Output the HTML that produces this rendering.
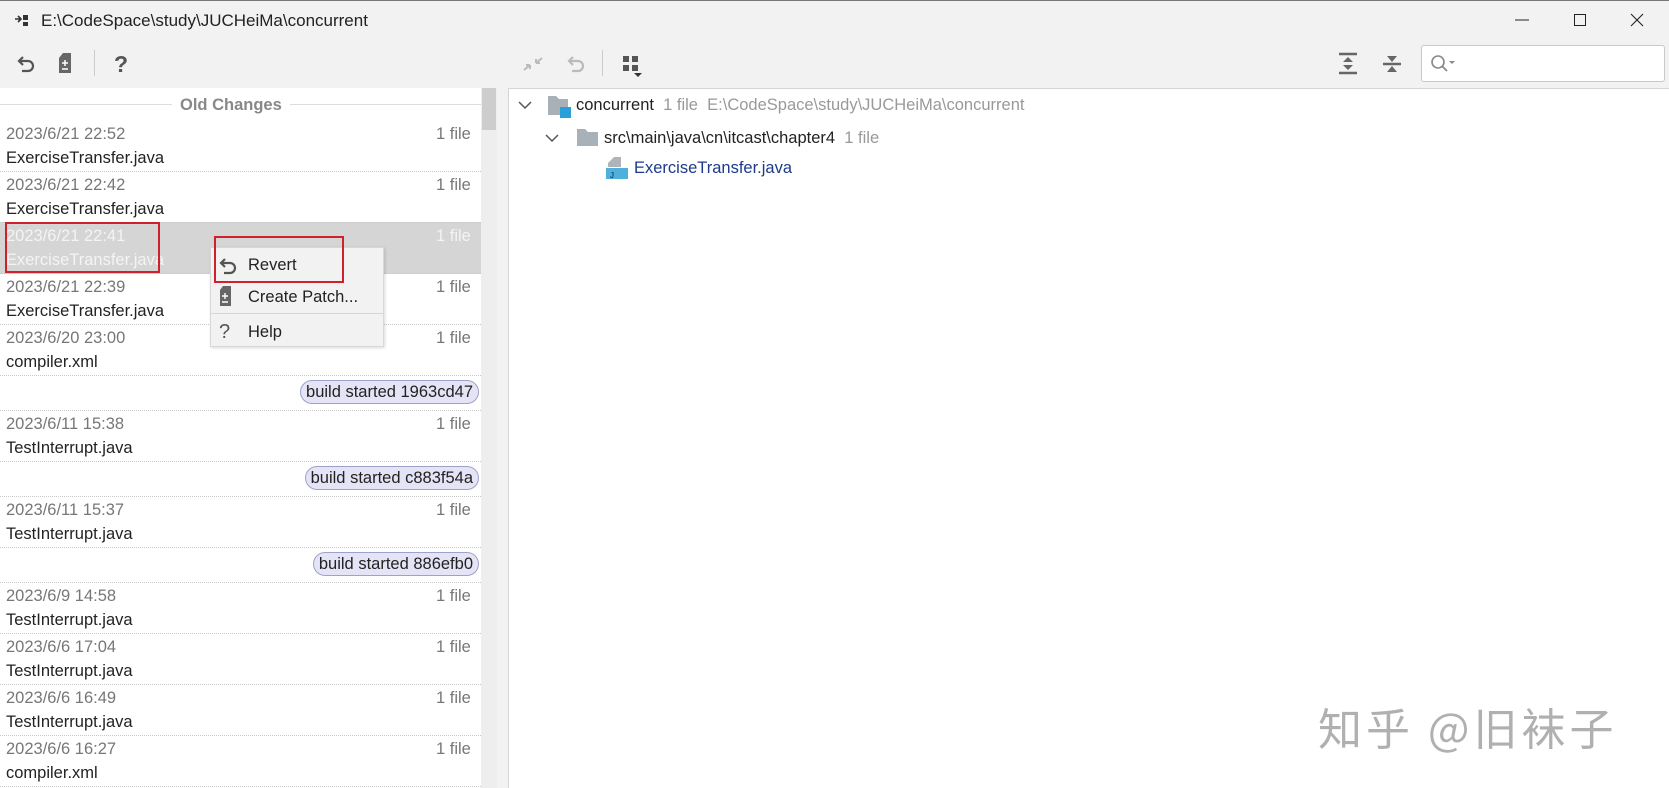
<!DOCTYPE html>
<html><head><meta charset="utf-8"><style>
*{margin:0;padding:0;box-sizing:border-box}
body{width:1669px;height:788px;overflow:hidden;background:#f2f2f2;font-family:"Liberation Sans","Noto Sans CJK SC",sans-serif;font-size:16px;color:#222;position:relative}
.a{position:absolute;white-space:nowrap}
.topline{position:absolute;left:0;top:0;width:1669px;height:1px;background:#777}
.left{position:absolute;left:0;top:88px;width:481px;height:700px;background:#fff}
.sb{position:absolute;left:481px;top:88px;width:16px;height:700px;background:#eee}
.thumb{position:absolute;left:482px;top:88px;width:14px;height:42px;background:#cdcdcd}
.right{position:absolute;left:508px;top:88px;width:1161px;height:700px;background:#fff;border-left:1px solid #d5d5d5;border-top:1px solid #d5d5d5}
.sep{position:absolute;left:0;width:481px;border-top:1px dotted #c8c8c8}
.pill{position:absolute;height:24px;border:1px solid #9ea2c8;background:#e4e4f6;border-radius:12px;padding:0 5px;line-height:22px;color:#222}
.menu{position:absolute;left:210px;top:247px;width:174px;height:100px;background:#f2f2f2;border:1px solid #d8d8d8;box-shadow:1px 1px 3px rgba(0,0,0,.15)}
.red{position:absolute;border:2px solid #d0202a}
</style></head><body>
<div class="topline"></div>
<svg class="a" style="left:14px;top:13px" width="16" height="16"><path d="M1 6h6M4 3l3 3-3 3" stroke="#333" stroke-width="1.6" fill="none"/><rect x="9" y="2" width="5" height="5" fill="#333"/><rect x="9" y="9" width="5" height="4" fill="#333"/></svg>
<div class="a" style="left:41px;top:11px;font-size:17px;color:#222">E:\CodeSpace\study\JUCHeiMa\concurrent</div>
<svg class="a" style="left:1512px;top:12px" width="140" height="16"><path d="M3 8h14" stroke="#222" stroke-width="1"/><rect x="62.5" y="2.5" width="11" height="11" fill="none" stroke="#222"/><path d="M119 2l12 12M131 2l-12 12" stroke="#222" stroke-width="1.1"/></svg>
<svg class="a" style="left:16px;top:54px" width="22" height="20"><path d="M7 3L3 7l4 4M3 7h9a5 5 0 0 1 0 10H6" stroke="#555" stroke-width="2.2" fill="none"/></svg>
<svg class="a" style="left:58px;top:52px" width="18" height="22"><path d="M5 1h8v20H1V6z" fill="#666"/><path d="M4 11h6M7 8v6M4 17h6" stroke="#fff" stroke-width="1.5"/></svg>
<div class="a" style="left:94px;top:50px;width:1px;height:26px;background:#ccc"></div>
<div class="a" style="left:114px;top:51px;font-size:23px;color:#555;font-weight:bold">?</div>
<svg class="a" style="left:522px;top:54px" width="22" height="20"><path d="M2 16l6-5M8 11v4M8 11H4M20 4l-6 5M14 9V5M14 9h4" stroke="#bbb" stroke-width="2" fill="none"/></svg>
<svg class="a" style="left:566px;top:54px" width="22" height="20"><path d="M7 3L3 7l4 4M3 7h9a5 5 0 0 1 0 10H6" stroke="#bbb" stroke-width="2.2" fill="none"/></svg>
<div class="a" style="left:602px;top:50px;width:1px;height:26px;background:#ccc"></div>
<svg class="a" style="left:622px;top:55px" width="22" height="24"><rect x="1" y="1" width="6" height="6" fill="#555"/><rect x="10" y="1" width="6" height="6" fill="#555"/><rect x="1" y="10" width="6" height="6" fill="#555"/><rect x="10" y="10" width="6" height="6" fill="#555"/><path d="M12 18h8l-4 4z" fill="#333"/></svg>
<svg class="a" style="left:1338px;top:52px" width="20" height="24"><path d="M1 2h18M1 21h18" stroke="#666" stroke-width="2.4"/><path d="M10 5l5 5H5zM10 18l5-5H5z" fill="#666"/></svg>
<svg class="a" style="left:1382px;top:52px" width="20" height="24"><path d="M1 12h18" stroke="#666" stroke-width="2.4"/><path d="M10 10l5-6H5zM10 14l5 6H5z" fill="#666"/></svg>
<div class="a" style="left:1421px;top:45px;width:244px;height:37px;background:#fff;border:1px solid #c9c9c9;border-radius:3px"></div>
<svg class="a" style="left:1430px;top:54px" width="28" height="22"><circle cx="8" cy="8" r="6" stroke="#888" stroke-width="1.6" fill="none"/><path d="M12 12l5 5" stroke="#888" stroke-width="1.8"/><path d="M19 7h6l-3 3z" fill="#888"/></svg>
<div class="left">
 <div class="a" style="left:0;top:16px;width:481px;border-top:1px solid #ddd"></div>
 <div class="a" style="left:172px;top:8px;padding:0 8px;background:#fff;color:#888;font-weight:bold;font-size:16.5px">Old Changes</div>
</div>
<div class="a" style="left:0;top:222px;width:481px;height:52px;background:#d5d5d5"></div>
<div id="rows"></div>
<div class="sb"></div><div class="thumb"></div>
<div class="a" style="left:497px;top:88px;width:11px;height:700px;background:#f2f2f2"></div>
<div class="right"></div>
<svg class="a" style="left:518px;top:100px" width="14" height="10"><path d="M1 2l6 6 6-6" stroke="#555" stroke-width="1.5" fill="none"/></svg>
<svg class="a" style="left:547px;top:95px" width="26" height="24"><path d="M1 1h8l3 3h9v16H1z" fill="#a8b0b8"/><rect x="13" y="12" width="11" height="11" fill="#2aa0d8"/></svg>
<div class="a" style="left:576px;top:96px;font-size:16.5px">concurrent <span style="color:#999">&nbsp;1 file&nbsp; E:\CodeSpace\study\JUCHeiMa\concurrent</span></div>
<svg class="a" style="left:545px;top:133px" width="14" height="10"><path d="M1 2l6 6 6-6" stroke="#555" stroke-width="1.5" fill="none"/></svg>
<svg class="a" style="left:576px;top:128px" width="24" height="20"><path d="M1 1h8l3 3h10v14H1z" fill="#a8b0b8"/></svg>
<div class="a" style="left:604px;top:129px;font-size:16.5px">src\main\java\cn\itcast\chapter4 <span style="color:#999">&nbsp;1 file</span></div>
<svg class="a" style="left:605px;top:156px" width="24" height="24"><path d="M9 1h7v10H3V7z" fill="#b0b4b8"/><rect x="1" y="12" width="22" height="11" fill="#4fb0dc"/><text x="5" y="22" font-size="8" fill="#123" font-family="Liberation Sans">J</text></svg>
<div class="a" style="left:634px;top:159px;font-size:16.5px;color:#1c3b8c">ExerciseTransfer.java</div>
<div class="menu">
 <div class="a" style="left:0;top:65px;width:172px;border-top:1px solid #d6d6d6"></div>
</div>
<svg class="a" style="left:218px;top:256px" width="22" height="20"><path d="M7 3L3 7l4 4M3 7h9a5 5 0 0 1 0 10H6" stroke="#555" stroke-width="2.2" fill="none"/></svg>
<div class="a" style="left:248px;top:256px;font-size:16.5px">Revert</div>
<svg class="a" style="left:219px;top:285px" width="16" height="22"><path d="M4 1h8v20H1V5z" fill="#666"/><path d="M3 11h6M6 8v6M3 17h6" stroke="#fff" stroke-width="1.4"/></svg>
<div class="a" style="left:248px;top:288px;font-size:16.5px">Create Patch...</div>
<div class="a" style="left:219px;top:321px;font-size:20px;color:#555">?</div>
<div class="a" style="left:248px;top:323px;font-size:16.5px">Help</div>
<div class="red" style="left:5px;top:222px;width:155px;height:51px"></div>
<div class="red" style="left:214px;top:236px;width:130px;height:47px"></div>
<div class="a" style="left:1318px;top:694px;font-size:44px;color:#b0b0b0;letter-spacing:4px;font-family:'Noto Sans CJK SC',sans-serif">知乎 @旧袜子</div>
<script>
var items=[['e','2023/6/21 22:52','ExerciseTransfer.java'],['e','2023/6/21 22:42','ExerciseTransfer.java'],['s','2023/6/21 22:41','ExerciseTransfer.java'],['e','2023/6/21 22:39','ExerciseTransfer.java'],['e','2023/6/20 23:00','compiler.xml'],['b','build started 1963cd47'],['e','2023/6/11 15:38','TestInterrupt.java'],['b','build started c883f54a'],['e','2023/6/11 15:37','TestInterrupt.java'],['b','build started 886efb0'],['e','2023/6/9 14:58','TestInterrupt.java'],['e','2023/6/6 17:04','TestInterrupt.java'],['e','2023/6/6 16:49','TestInterrupt.java'],['e','2023/6/6 16:27','compiler.xml']];
var y=120,h='';
items.forEach(function(it){
 if(it[0]=='b'){h+='<div class="pill" style="top:'+(y+5)+'px;right:'+(1669-479)+'px;font-size:16.5px">'+it[1]+'</div>';y+=35;}
 else{var s=it[0]=='s';var dc=s?'color:#f4f4f4':'color:#777';var fc=s?'color:#f4f4f4':'color:#222';
 h+='<div class="a" style="left:6px;top:'+(y+5)+'px;font-size:16.5px;'+dc+'">'+it[1]+'</div>';
 h+='<div class="a" style="left:436px;top:'+(y+5)+'px;font-size:16.5px;'+dc+'">1 file</div>';
 h+='<div class="a" style="left:6px;top:'+(y+29)+'px;font-size:16.5px;'+fc+'">'+it[2]+'</div>';y+=51;}
 h+='<div class="sep" style="top:'+y+'px"></div>';
});
document.getElementById('rows').innerHTML=h;
</script>
</body></html>
